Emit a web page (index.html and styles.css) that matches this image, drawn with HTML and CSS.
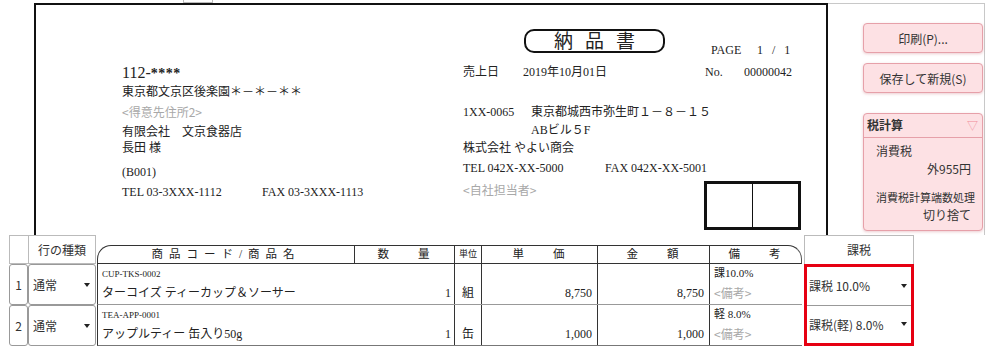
FILE: index.html
```html
<!DOCTYPE html>
<html lang="ja">
<head>
  <meta charset="UTF-8" />
  <title>納品書</title>
  <link rel="stylesheet" href="styles.css">
</head>
<body>
  <div class="screen">

    <!-- edge of the tab strip above -->
    <div class="strip"><div class="tab"></div></div>

    <div class="top">
      <!-- Document sheet -->
      <div class="sheet">
        <div class="bill">
          <div class="zip">112-<span class="stars">****</span></div>
          <div class="l2">東京都文京区後楽園＊－＊－＊＊</div>
          <div class="l3 ph">&lt;得意先住所2&gt;</div>
          <div class="l4">有限会社　文京食器店</div>
          <div class="l5">長田 様</div>
          <div class="l6">(B001)</div>
          <div class="l7 pair"><span class="w140">TEL 03-3XXX-1112</span><span>FAX 03-3XXX-1113</span></div>
        </div>

        <div class="issuer">
          <div class="title-row">
            <div class="title">納品書</div>
            <div class="page"><span class="w46">PAGE</span><span class="pg">1 / 1</span></div>
          </div>
          <div class="date-row pair">
            <span class="w60">売上日</span>
            <span class="w182">2019年10月01日</span>
            <span class="w39">No.</span>
            <span>00000042</span>
          </div>
          <div class="addr-row pair"><span class="w68">1XX-0065</span><span>東京都城西市弥生町１－８－１５</span></div>
          <div class="bldg">ABビル５F</div>
          <div class="co">株式会社 やよい商会</div>
          <div class="tel-row pair"><span class="w142">TEL 042X-XX-5000</span><span>FAX 042X-XX-5001</span></div>
          <div class="staff-row">
            <span class="staff ph">&lt;自社担当者&gt;</span>
            <div class="stamp"><div></div><div></div></div>
          </div>
        </div>
      </div>

      <!-- Side panel -->
      <aside class="side">
        <button class="btn">印刷(P)...</button>
        <button class="btn btn-save">保存して新規(S)</button>
        <div class="taxcalc">
          <div class="tc-head"><span>税計算</span><span class="tc-arrow">▽</span></div>
          <div class="tc-label">消費税</div>
          <div class="tc-value">外955円</div>
          <div class="tc-label tc-small">消費税計算端数処理</div>
          <div class="tc-value">切り捨て</div>
        </div>
      </aside>
    </div>

    <!-- Detail lines -->
    <div class="lines">
      <div class="kinds">
        <div class="k-head"></div>
        <div class="k-head">行の種類</div>
        <div class="k-no">1</div>
        <div class="k-sel"><span>通常</span><span class="caret"></span></div>
        <div class="k-no">2</div>
        <div class="k-sel"><span>通常</span><span class="caret"></span></div>
      </div>

      <div class="items">
        <div class="ihead">
          <div class="c-prod h-prod">商品コード/商品名</div>
          <div class="c-qty">数　　量</div>
          <div class="c-unit h-unit">単位</div>
          <div class="c-price">単　　価</div>
          <div class="c-amt">金　　額</div>
          <div class="c-memo">備　　考</div>
        </div>

        <div class="irow">
          <div class="c-main">
            <div class="code">CUP-TKS-0002</div>
            <div class="name-line"><span>ターコイズ ティーカップ＆ソーサー</span><span>1</span></div>
          </div>
          <div class="c-unit"><div class="top-line"></div><div class="num-line center">組</div></div>
          <div class="c-price"><div class="top-line"></div><div class="num-line">8,750</div></div>
          <div class="c-amt"><div class="top-line"></div><div class="num-line">8,750</div></div>
          <div class="c-memo"><div class="top-line">課10.0%</div><div class="num-line left ph">&lt;備考&gt;</div></div>
        </div>

        <div class="irow">
          <div class="c-main">
            <div class="code">TEA-APP-0001</div>
            <div class="name-line"><span>アップルティー 缶入り50g</span><span>1</span></div>
          </div>
          <div class="c-unit"><div class="top-line"></div><div class="num-line center">缶</div></div>
          <div class="c-price"><div class="top-line"></div><div class="num-line">1,000</div></div>
          <div class="c-amt"><div class="top-line"></div><div class="num-line">1,000</div></div>
          <div class="c-memo"><div class="top-line">軽 8.0%</div><div class="num-line left ph">&lt;備考&gt;</div></div>
        </div>
      </div>

      <div class="taxes">
        <div class="t-head">課税</div>
        <div class="t-sel">
          <div class="t-row"><span>課税 10.0%</span><span class="caret"></span></div>
          <div class="t-row"><span>課税(軽) 8.0%</span><span class="caret"></span></div>
        </div>
      </div>
    </div>

  </div>
</body>
</html>
```

FILE: styles.css
```css
* {
  box-sizing: border-box;
}

body, html {
  margin: 0;
  padding: 0;
  background: #fff;
}

.screen {
  width: 988px;
  height: 347px;
  overflow: hidden;
  color: #222;
  font-family: "Liberation Serif", "Noto Sans CJK JP", serif;
  font-size: 12px;
}

.strip {
  height: 3px;
}

.tab {
  margin-left: 183px;
  width: 30px;
  height: 3px;
  border: 1px solid #bbb;
  border-top: none;
}

.top {
  display: flex;
  height: 232px;
}

/* ---------- sheet ---------- */
.sheet {
  margin-left: 34px;
  width: 794px;
  height: 232px;
  border: 2px solid #111;
  border-bottom: none;
  display: flex;
  padding-left: 86px;
}

.pair {
  display: flex;
  white-space: nowrap;
}

.ph {
  color: #a8a8a8;
  font-family: "Noto Sans CJK JP", sans-serif;
}

.bill {
  width: 341px;
  padding-top: 59px;
  line-height: 16px;
}

.zip {
  font-size: 16px;
  line-height: 18px;
}

.stars {
  font-size: 14px;
  font-weight: bold;
  letter-spacing: 0.5px;
}

.l2 { line-height: 18px; }
.l3 { margin-top: 2px; line-height: 18px; }
.l4 { margin-top: 3px; }
.l6 { margin-top: 8px; }
.l7 { margin-top: 4px; }

.w39 { width: 39px; }
.w46 { width: 46px; }
.w60 { width: 60px; }
.w68 { width: 68px; }
.w140 { width: 140px; }
.w142 { width: 142px; }
.w182 { width: 182px; }

.issuer {
  flex: 1;
  padding-top: 24px;
  line-height: 16px;
}

.title-row {
  display: flex;
  height: 24px;
}

.title {
  margin-left: 61px;
  width: 141px;
  height: 24px;
  border: 2.5px solid #111;
  border-radius: 10px;
  text-align: center;
  font-family: "Noto Sans CJK JP", sans-serif;
  font-size: 19px;
  line-height: 18px;
  letter-spacing: 12px;
  padding-left: 12px;
}

.page {
  margin-left: 46px;
  padding-top: 13px;
  display: flex;
  white-space: nowrap;
}

.pg {
  word-spacing: 6px;
}

.date-row { margin-top: 11px; }
.addr-row { margin-top: 24px; }
.bldg { margin-top: 2px; padding-left: 68px; }
.co { margin-top: 2px; }
.tel-row { margin-top: 4px; }

.staff-row {
  margin-top: 5px;
  display: flex;
  align-items: flex-start;
}

.staff {
  width: 241px;
  padding-top: 1px;
}

.stamp {
  width: 97px;
  height: 49px;
  border: 3px solid #111;
  display: flex;
}

.stamp div {
  flex: 1;
}

.stamp div:first-child {
  border-right: 1px solid #111;
}

/* ---------- side ---------- */
.side {
  width: 157px;
  height: 232px;
  border-top: 1px solid #c8c8c8;
  border-right: 1px solid #c8c8c8;
  padding: 19px 0 0 35px;
  font-family: "Noto Sans CJK JP", sans-serif;
}

.btn {
  display: block;
  width: 120px;
  height: 30px;
  margin: 0;
  padding: 0;
  background: #fde1e4;
  border: 1px solid #e6a0a9;
  border-radius: 4px;
  box-shadow: 0 1px 3px rgba(200, 110, 120, 0.35);
  font-family: "Noto Sans CJK JP", sans-serif;
  font-size: 12px;
  color: #333;
}

.btn-save {
  margin-top: 10px;
}

.taxcalc {
  margin-top: 20px;
  width: 120px;
  height: 118px;
  background: #fde1e4;
  border: 1px solid #e6a0a9;
  border-radius: 4px;
  box-shadow: 0 1px 3px rgba(200, 110, 120, 0.35);
  font-size: 12px;
  color: #333;
}

.tc-head {
  display: flex;
  justify-content: space-between;
  height: 24px;
  line-height: 22px;
  padding: 0 4px 0 3px;
  border-bottom: 1px solid #e6a0a9;
  font-weight: bold;
}

.tc-arrow {
  color: #f08a98;
  font-weight: normal;
  font-size: 11px;
}

.tc-label {
  padding-left: 12px;
  margin-top: 4px;
  line-height: 18px;
}

.tc-small {
  margin-top: 10px;
  font-size: 11px;
}

.tc-value {
  text-align: right;
  padding-right: 11px;
  line-height: 18px;
}

/* ---------- lines ---------- */
.lines {
  display: flex;
  align-items: flex-start;
  padding-left: 9px;
}

.kinds {
  display: grid;
  grid-template-columns: 19px 68px;
  grid-template-rows: 29px 41px 41px;
  font-family: "Noto Sans CJK JP", sans-serif;
  font-size: 12px;
  color: #333;
}

.k-head {
  border: 1px solid #bbb;
  border-right: none;
  text-align: center;
  line-height: 27px;
}

.k-head:nth-child(2) {
  border-right: 1px solid #bbb;
}

.k-no {
  border: 1px solid #999;
  border-radius: 3px;
  text-align: center;
  line-height: 39px;
}

.k-sel {
  border: 1px solid #999;
  border-radius: 3px;
  display: flex;
  justify-content: space-between;
  align-items: center;
  padding: 0 5px 0 4px;
}

.caret {
  width: 0;
  height: 0;
  border-left: 3.5px solid transparent;
  border-right: 3.5px solid transparent;
  border-top: 4px solid #222;
}

.items {
  margin-top: 10px;
  margin-left: 1px;
  width: 705px;
  font-family: "Liberation Serif", "Noto Sans CJK JP", serif;
  font-size: 11.5px;
}

.ihead {
  display: flex;
  height: 19px;
  border: 1px solid #333;
  border-right: 1px solid #555;
  border-radius: 14px 14px 0 0;
  line-height: 17px;
  text-align: center;
  white-space: nowrap;
}

.ihead > div + div {
  border-left: 1px solid #333;
}

.h-prod {
  letter-spacing: 6px;
}

.h-unit {
  font-size: 9px;
}

.c-prod { width: 256px; }
.c-qty { width: 100px; letter-spacing: 2px; }
.c-unit { width: 27px; }
.c-price { width: 116px; letter-spacing: 2px; }
.c-amt { width: 112px; letter-spacing: 2px; }
.c-memo { flex: 1; letter-spacing: 2px; }

.irow {
  display: flex;
  height: 41px;
  border-left: 1px solid #333;
  border-bottom: 1px solid #999;
  white-space: nowrap;
}

.irow:last-child {
  border-bottom-color: #777;
}

.irow > div + div {
  border-left: 1px solid #333;
}

.irow .c-price,
.irow .c-amt,
.irow .c-memo {
  letter-spacing: 0;
}

.c-main {
  width: 356px;
  padding: 1px 3px 0 4px;
}

.code {
  font-size: 9px;
  line-height: 18px;
}

.name-line {
  display: flex;
  justify-content: space-between;
  line-height: 20px;
  font-size: 12px;
}

.top-line {
  height: 19px;
  line-height: 18px;
  padding-left: 4px;
  font-size: 11px;
}

.num-line {
  line-height: 20px;
  text-align: right;
  padding-right: 5px;
  font-size: 12px;
}

.num-line.center {
  text-align: center;
  padding-right: 0;
}

.num-line.left {
  text-align: left;
  padding-left: 4px;
}

.taxes {
  margin-left: 2px;
  width: 110px;
  font-family: "Noto Sans CJK JP", sans-serif;
  font-size: 12px;
  color: #333;
}

.t-head {
  height: 29px;
  border: 1px solid #bbb;
  border-bottom: none;
  text-align: center;
  line-height: 28px;
}

.t-sel {
  height: 82px;
  border: 3px solid #e60012;
  display: flex;
  flex-direction: column;
}

.t-row {
  flex: 1;
  display: flex;
  justify-content: space-between;
  align-items: center;
  padding: 0 4px 0 2px;
}

.t-row + .t-row {
  border-top: 1px solid #999;
}
```
